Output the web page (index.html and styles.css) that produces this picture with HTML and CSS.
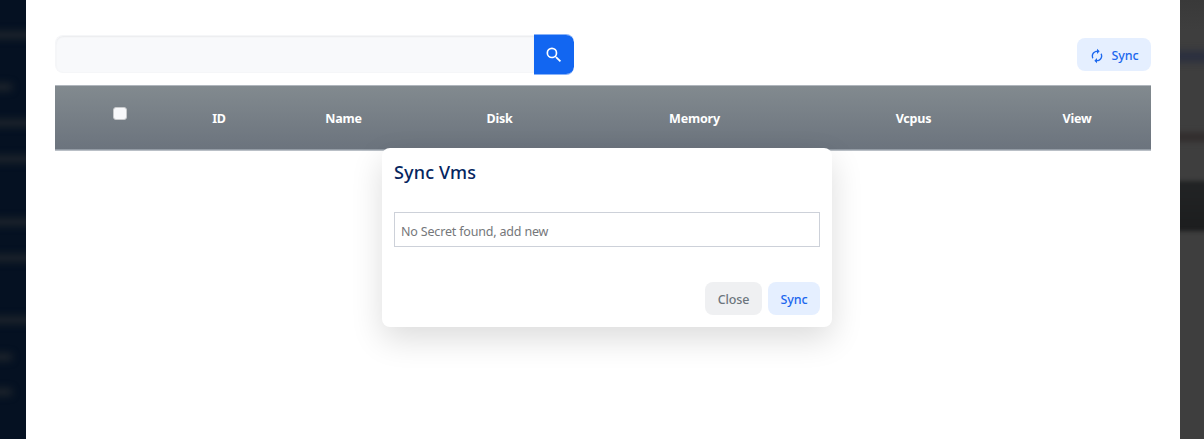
FILE: index.html
```html
<!DOCTYPE html>
<html lang="en">
<head>
<meta charset="utf-8">
<title>Sync Vms</title>
<link rel="stylesheet" href="styles.css">
</head>
<body>
<div class="page">
  <aside class="sidebar">
    <i class="item r1"></i><i class="item short r2"></i><i class="item r3"></i><i class="item r4"></i><i class="item r5"></i><i class="item r6"></i><i class="item r7"></i><i class="item short r8"></i><i class="item short r9"></i>
  </aside>
  <main class="panel">
    <div class="toolbar">
      <div class="search">
        <input class="search-input" type="text" aria-label="Search">
        <button class="search-button" aria-label="Search"><svg width="20" height="20" viewBox="0 0 24 24" fill="currentColor"><path d="M15.500 14h-.79l-.28-.27A6.470 6.470 0 0 0 16 9.500 6.500 6.500 0 1 0 9.500 16c1.610 0 3.090-.59 4.230-1.570l.27.28v.79l5 4.990L20.490 19l-4.990-5zm-6 0a4.500 4.500 0 1 1 0-9 4.500 4.500 0 0 1 0 9z"/></svg></button>
      </div>
      <button class="button sync-all"><svg class="sync-icon" width="16" height="16" viewBox="0 0 24 24" fill="currentColor"><path d="M12 6v3l4-4-4-4v3c-4.420 0-8 3.580-8 8 0 1.570.46 3.030 1.240 4.260L6.700 14.800A5.870 5.870 0 0 1 6 12c0-3.310 2.690-6 6-6zm6.760 1.740L17.300 9.200c.44.84.7 1.790.7 2.800 0 3.310-2.690 6-6 6v-3l-4 4 4 4v-3c4.420 0 8-3.580 8-8 0-1.570-.46-3.030-1.240-4.260z"/></svg><span>Sync</span></button>
    </div>
    <div class="table-head">
      <span class="check-cell"><i class="checkbox"></i></span>
      <span class="cell">ID</span><span class="cell">Name</span><span class="cell">Disk</span><span class="cell">Memory</span><span class="cell">Vcpus</span><span class="cell">View</span>
    </div>
  </main>
  <aside class="backdrop"><i class="blue-line"></i><i class="red-line"></i><i class="band"></i></aside>
</div>
<section class="modal">
  <h2 class="title">Sync Vms</h2>
  <div class="select">No Secret found, add new</div>
  <div class="actions"><button class="button close">Close</button><button class="button confirm">Sync</button></div>
</section>
</body>
</html>
```
FILE: styles.css
```css
* { box-sizing: border-box; }
body { margin: 0; font-family: "Noto Sans", "Open Sans", sans-serif; overflow: hidden; }
button { border: 0; margin: 0; padding: 0; font-family: inherit; }
.page { display: grid; grid-template-columns: 26px 1154px 24px; height: 439px; }
.sidebar { position: relative; overflow: hidden; background: #051122; }
.item { position: absolute; left: -12px; width: 46px; height: 8px; background: #1c232b; filter: blur(3.500px); }
.short { width: 24px; }
.r1 { top: 31px; }
.r2 { top: 83px; }
.r3 { top: 119px; }
.r4 { top: 155px; }
.r5 { top: 218px; }
.r6 { top: 254px; }
.r7 { top: 316px; }
.r8 { top: 353px; }
.r9 { top: 388px; }
.panel { background: #fff; padding: 34px 29px 0; }
.toolbar { display: flex; justify-content: space-between; height: 51px; }
.search { display: flex; width: 519px; height: 41px; }
.search-input { width: 479px; height: 38px; margin-top: 1px; border: 1px solid #f5f6f8; border-right: 0; border-radius: 8px 0 0 8px; background: #f8f9fb; box-shadow: inset 0 1px 2px rgba(0,0,0,.06); outline: 0; }
.search-button { display: grid; place-items: center; width: 40px; height: 41px; padding-top: 1px; border: solid rgba(18,102,241,.5); border-width: 1px 0; border-radius: 0 8px 8px 0; background: #1266f1; background-clip: padding-box; color: #fff; }
.button { display: flex; align-items: center; justify-content: center; height: 33px; padding-top: 2px; border-radius: 8px; background: #e5efff; color: #1c68ee; font-size: 12.500px; font-weight: 500; line-height: 18px; letter-spacing: -.1px; }
.sync-all { width: 74px; margin-top: 4px; gap: 6px; }
.sync-icon { flex: none; }
.table-head { display: grid; grid-template-columns: 130px 68px 181px 131px 259px 179px 148px; height: 66px; border-top: 1px solid #b0b6bd; border-bottom: 1px solid #b9bfc6; box-shadow: inset 0 -1px #939ba4; background: linear-gradient(#828a8f, #6b737d); color: #fff; font-size: 12.500px; font-weight: 700; letter-spacing: -.2px; }
.cell { display: flex; align-items: center; justify-content: center; padding-top: 1px; }
.check-cell { display: flex; justify-content: center; padding-top: 21px; }
.checkbox { width: 14px; height: 13px; border: 1px solid #c8cacc; border-radius: 3px; background: #f8f9fb; }
.backdrop { position: relative; overflow: hidden; background: linear-gradient(#393939, #3e3e3e 30px); }
.blue-line, .red-line, .band { position: absolute; left: -8px; width: 40px; }
.blue-line { top: 52px; height: 9px; background: #252b3f; filter: blur(4px); }
.red-line { top: 133px; height: 8px; background: #302b2b; filter: blur(3px); }
.band { top: 181px; height: 50px; background: linear-gradient(#222425, #1c1d1e); filter: blur(2px); }
.modal { position: absolute; left: 382px; top: 148px; width: 450px; height: 179px; padding: 12px; border-radius: 8px; background: #fff; box-shadow: 0 12px 32px rgba(0,0,0,.14); }
.title { margin: 0; height: 52px; color: #05265f; font-size: 18px; font-weight: 500; line-height: 25px; letter-spacing: .15px; }
.select { height: 35px; padding: 10px 6px 0; border: 1px solid #cdd1d9; color: #75777a; font-size: 12.500px; line-height: 18px; letter-spacing: -.18px; white-space: nowrap; }
.actions { display: flex; justify-content: flex-end; gap: 6px; margin-top: 35px; }
.close { width: 57px; background: #eff0f2; color: #6c757d; }
.confirm { width: 52px; }
```
